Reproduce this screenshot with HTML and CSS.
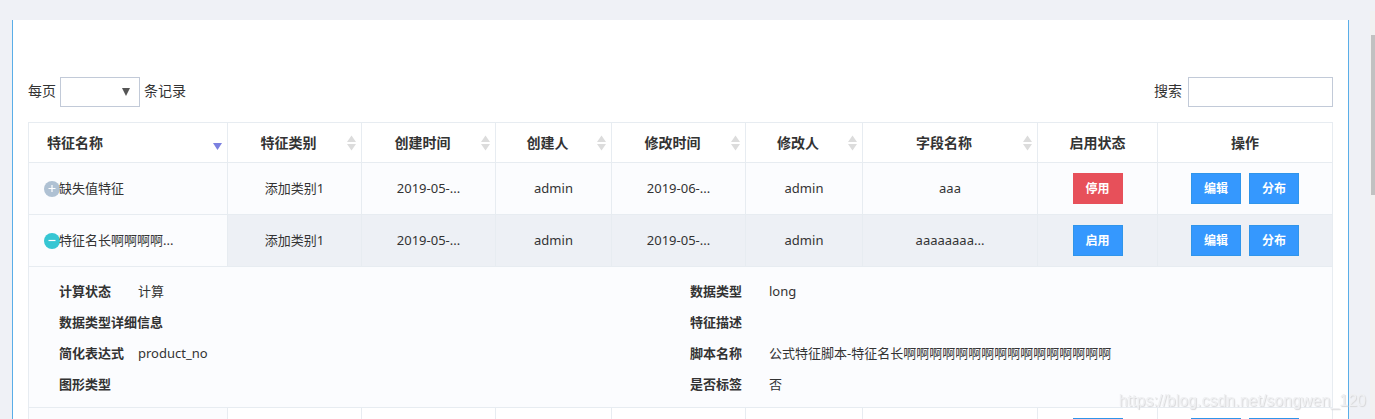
FILE: index.html
```html
<!DOCTYPE html>
<html lang="zh-CN">
<head>
<meta charset="utf-8">
<title>特征管理</title>
<link rel="stylesheet" href="styles.css">
</head>
<body>
<svg class="sprite" aria-hidden="true">
  <symbol id="sort" viewBox="0 0 9 16"><path d="M4.500 0.500L9 7H0z M0 9h9L4.500 15.500z" fill="#dcdcdc"/></symbol>
  <symbol id="sort-desc" viewBox="0 0 9 16"><path d="M0 8h9L4.500 15z" fill="#7b80e0"/></symbol>
  <symbol id="plus" viewBox="0 0 16 16"><circle cx="8" cy="8" r="8" fill="#afc1d3"/><path d="M4.500 7.500h7M8 4v7" stroke="#fff" stroke-width="1.200"/></symbol>
  <symbol id="minus" viewBox="0 0 16 16"><circle cx="8" cy="8" r="8" fill="#36c6d3"/><path d="M4.500 7.500h7" stroke="#fff" stroke-width="1.200"/></symbol>
</svg>
<main class="panel">
  <div class="toolbar">
    <div class="field">
      <label for="size">每页</label>
      <span class="select-wrap">
        <select id="size" class="control size"><option></option></select>
        <svg class="caret" viewBox="0 0 8 8" aria-hidden="true"><path d="M0 0h8L4 8z" fill="#555"/></svg>
      </span>
      <label for="size">条记录</label>
    </div>
    <div class="field search-field">
      <label for="search">搜索</label>
      <input id="search" class="control search" type="text">
    </div>
  </div>
  <table class="grid">
    <colgroup>
      <col class="c-name"><col class="c-mid"><col class="c-mid"><col class="c-creator"><col class="c-mid"><col class="c-editor"><col class="c-wide"><col class="c-state"><col class="c-wide">
    </colgroup>
    <thead>
      <tr>
        <th><button class="sorter sorter-left"><span>特征名称</span><svg><use href="#sort-desc"/></svg></button></th>
        <th><button class="sorter"><span>特征类别</span><svg><use href="#sort"/></svg></button></th>
        <th><button class="sorter"><span>创建时间</span><svg><use href="#sort"/></svg></button></th>
        <th><button class="sorter"><span>创建人</span><svg><use href="#sort"/></svg></button></th>
        <th><button class="sorter"><span>修改时间</span><svg><use href="#sort"/></svg></button></th>
        <th><button class="sorter"><span>修改人</span><svg><use href="#sort"/></svg></button></th>
        <th><button class="sorter"><span>字段名称</span><svg><use href="#sort"/></svg></button></th>
        <th>启用状态</th>
        <th>操作</th>
      </tr>
    </thead>
    <tbody>
      <tr class="odd">
        <td class="name"><div class="name-cell"><button class="toggle" aria-label="展开"><svg><use href="#plus"/></svg></button><span>缺失值特征</span></div></td>
        <td>添加类别1</td><td>2019-05-...</td><td>admin</td><td>2019-06-...</td><td>admin</td><td>aaa</td>
        <td><button class="btn btn-stop">停用</button></td>
        <td><div class="actions"><button class="btn">编辑</button><button class="btn">分布</button></div></td>
      </tr>
      <tr class="active">
        <td class="name"><div class="name-cell"><button class="toggle" aria-label="收起"><svg><use href="#minus"/></svg></button><span>特征名长啊啊啊啊...</span></div></td>
        <td>添加类别1</td><td>2019-05-...</td><td>admin</td><td>2019-05-...</td><td>admin</td><td>aaaaaaaa...</td>
        <td><button class="btn">启用</button></td>
        <td><div class="actions"><button class="btn">编辑</button><button class="btn">分布</button></div></td>
      </tr>
      <tr class="odd">
        <td class="detail" colspan="9">
          <dl class="details">
            <div><dt>计算状态</dt><dd>计算</dd></div>
            <div><dt>数据类型</dt><dd>long</dd></div>
            <div><dt>数据类型详细信息</dt><dd></dd></div>
            <div><dt>特征描述</dt><dd></dd></div>
            <div><dt>简化表达式</dt><dd>product_no</dd></div>
            <div><dt>脚本名称</dt><dd>公式特征脚本-特征名长啊啊啊啊啊啊啊啊啊啊啊啊啊啊啊啊</dd></div>
            <div><dt>图形类型</dt><dd></dd></div>
            <div><dt>是否标签</dt><dd>否</dd></div>
          </dl>
        </td>
      </tr>
      <tr>
        <td class="name"></td>
        <td></td><td></td><td></td><td></td><td></td><td></td>
        <td><button class="btn" aria-label="启用"></button></td>
        <td><div class="actions"><button class="btn" aria-label="编辑"></button><button class="btn" aria-label="分布"></button></div></td>
      </tr>
    </tbody>
  </table>
</main>
<div class="track"><div class="thumb"></div></div>
<div class="watermark">https://blog.csdn.net/songwen_120</div>
</body>
</html>
```
FILE: styles.css
```css
* { box-sizing: border-box; }
body {
  margin: 0;
  height: 100vh;
  overflow: hidden;
  padding: 20px 26px 0 12px;
  background: #eff1f6;
  color: #333;
  font: 13px/20px "Noto Sans", "Noto Sans CJK SC", sans-serif;
}
button { font: inherit; color: inherit; border: 0; background: none; padding: 0; cursor: pointer; }
.sprite { display: none; }
.panel {
  height: 100%;
  overflow: hidden;
  padding: 57px 15px 0;
  background: #fff;
  border: solid #5aaee8;
  border-width: 0 1px;
}
.toolbar { display: flex; justify-content: space-between; margin-bottom: 15px; font-size: 14px; }
.field { display: flex; align-items: center; gap: 4px; }
.field label { padding-bottom: 2px; }
.search-field { gap: 6px; }
.control { height: 30px; border: 1px solid #c2cad8; border-radius: 0; background: #fff; font: inherit; }
.select-wrap { position: relative; display: flex; }
.size { width: 80px; appearance: none; }
.search { width: 145px; padding: 0 8px; }
.caret { position: absolute; right: 10px; top: 11px; width: 8px; height: 8px; pointer-events: none; }

.grid { width: 100%; table-layout: fixed; border-collapse: collapse; text-align: center; }
.c-name { width: 199px; }
.c-mid { width: 134px; }
.c-creator { width: 116px; }
.c-editor { width: 117px; }
.c-wide { width: 175px; }
.c-state { width: 120px; }
.grid th, .grid td { border: 1px solid #e7ecf1; padding: 0; }
.grid th { height: 40px; font-size: 14px; font-weight: 700; }
.grid td { height: 52px; padding-bottom: 2px; }
.grid td:nth-child(n+8) { padding-bottom: 0; }
.sorter { display: flex; align-items: center; width: 100%; padding: 0 5px 0 2px; }
.sorter span { flex: 1; }
.sorter svg { width: 9px; height: 16px; }
.sorter-left { padding-left: 18px; text-align: left; }
.odd td, .grid .name { background: #fbfcfe; }
.active td { background: #edf0f5; }
.grid .name { padding: 0 0 0 15px; text-align: left; }
.name-cell { display: flex; align-items: center; }
.name-cell span { padding-bottom: 2px; }
.toggle { width: 15px; height: 16px; }
.toggle svg { display: block; width: 16px; height: 16px; }
.btn {
  width: 50px;
  height: 31px;
  background: #3598fe;
  border: 1px solid #3095ea;
  color: #fff;
  font-size: 12px;
  font-weight: 700;
  vertical-align: middle;
}
.btn-stop { background: #e7505a; border-color: #e7505a; }
.actions { display: flex; justify-content: center; gap: 8px; }
.grid .detail { padding: 8px 11px 8px 30px; text-align: left; }
.details { display: grid; grid-template-columns: 1fr 1fr; margin: 0; }
.details div { display: flex; align-items: center; height: 31px; }
.details dt { min-width: 79px; font-weight: 700; }
.details dd { margin: 0; }

.track { position: fixed; top: 11px; right: 0; bottom: 0; width: 5px; background: #f1f1f1; }
.thumb { height: 160px; margin: 24px 0 0 1px; background: #c1c1c1; }
.watermark {
  position: fixed;
  right: 9px;
  bottom: 8px;
  color: #eff0f2;
  font: 16px/20px "Liberation Sans", sans-serif;
  text-shadow: 1px 1px 1px #d6d6d8;
}
```
